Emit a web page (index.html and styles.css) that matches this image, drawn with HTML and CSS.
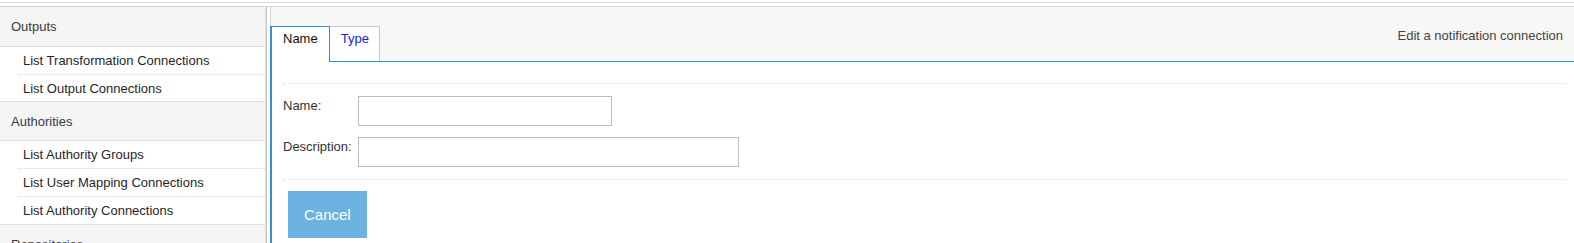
FILE: index.html
```html
<!DOCTYPE html>
<html>
<head>
<meta charset="utf-8">
<link rel="stylesheet" href="styles.css">
</head>
<body class="page">
<div class="topbar"></div>
<div class="layout">
  <nav class="sidebar">
    <div class="group">
      <div class="group-head group-head-first">Outputs</div>
      <a class="item">List Transformation Connections</a>
      <a class="item">List Output Connections</a>
    </div>
    <div class="group">
      <div class="group-head">Authorities</div>
      <a class="item">List Authority Groups</a>
      <a class="item">List User Mapping Connections</a>
      <a class="item">List Authority Connections</a>
    </div>
    <div class="group">
      <div class="group-head">Repositories</div>
      <a class="item">List Repository Connections</a>
    </div>
  </nav>
  <main class="main">
    <section class="panel">
      <div class="panel-head">
        <div class="tab tab-active">Name</div>
        <a class="tab tab-link">Type</a>
        <div class="panel-title">Edit a notification connection</div>
      </div>
      <div class="panel-body">
        <div class="sep"></div>
        <div class="form">
          <div class="row">
            <label class="label">Name:</label>
            <input class="field field-name" type="text">
          </div>
          <div class="row">
            <label class="label">Description:</label>
            <input class="field field-desc" type="text">
          </div>
        </div>
        <div class="sep"></div>
        <div class="actions">
          <button class="btn">Cancel</button>
        </div>
      </div>
    </section>
  </main>
</div>
</body>
</html>
```
FILE: styles.css
```css
html, body {
  margin: 0;
  padding: 0;
  overflow: hidden;
}
.page {
  font-family: "Liberation Sans", Arial, sans-serif;
  font-size: 13px;
  color: #333;
  background: #fff;
}
.topbar {
  height: 2px;
  border-bottom: 1px solid #d9d9d9;
  margin-bottom: 3px;
}
.layout {
  display: flex;
  border-top: 1px solid #d4d4d4;
  align-items: stretch;
  min-height: 400px;
}
.sidebar {
  width: 265px;
  flex: 0 0 265px;
  border-right: 1px solid #e2e2e2;
}
.group {
  border-bottom: 1px solid #e0e0e0;
}
.group-head {
  background: #f5f5f5;
  padding: 12px 11px 11px;
  line-height: 15px;
  color: #3a3a44;
  border-bottom: 1px solid #e0e0e0;
}
.group-head-first {
  padding-bottom: 12px;
}
.item {
  display: block;
  margin-left: 18px;
  padding: 6px 0 6px 5px;
  line-height: 15px;
  color: #1f1f2a;
  border-bottom: 1px dotted #d8d8d8;
}
.item:last-child {
  border-bottom: none;
}
.group:first-child .item:last-child {
  padding-bottom: 5px;
}
.main {
  flex: 1;
  border-left: 1px solid #c2c2c2;
  padding-left: 3px;
}
.panel {
  display: flex;
  flex-direction: column;
}
.panel-head {
  display: flex;
  align-items: flex-end;
  background: #f7f7f7;
  border-left: 1px solid #d4d4d4;
  border-bottom: 1px solid #2d93d6;
  padding-top: 19px;
}
.tab {
  display: block;
  background: #fff;
  line-height: 23px;
  padding: 0 10px 11px 11px;
  border-top: 1px solid #c8c8c8;
  border-right: 1px solid #c8c8c8;
}
.tab-active {
  margin-left: -1px;
  margin-bottom: -1px;
  padding: 0 11px 12px 11px;
  color: #111;
  border-left: 2px solid #2d93d6;
  border-top-color: #2d93d6;
  border-right-color: #2d93d6;
}
.tab-link {
  color: #1a1ae6;
}
.panel-title {
  margin-left: auto;
  align-self: flex-start;
  margin-top: 2px;
  padding-right: 11px;
  line-height: 15px;
  color: #444;
}
.panel-body {
  border-left: 2px solid #2d93d6;
  padding: 21px 9px 60px 11px;
}
.sep {
  border-top: 1px dotted #e0e0e0;
}
.form {
  display: flex;
  flex-direction: column;
  gap: 11px;
  padding: 12px 0;
}
.row {
  display: flex;
  align-items: flex-start;
}
.label {
  width: 75px;
  flex: 0 0 75px;
  padding-top: 2px;
  line-height: 15px;
  color: #333;
}
.field {
  box-sizing: border-box;
  height: 30px;
  margin: 0;
  border: 1px solid #bcbcbc;
  border-radius: 0;
  background: #fff;
  font-family: "Liberation Sans", Arial, sans-serif;
  font-size: 13px;
  padding: 0 6px;
}
.field-name {
  width: 254px;
}
.field-desc {
  width: 381px;
}
.actions {
  padding-top: 11px;
}
.btn {
  margin-left: 5px;
  background: #6cb2e1;
  color: #fff;
  border: none;
  border-radius: 0;
  font-family: "Liberation Sans", Arial, sans-serif;
  font-size: 15px;
  line-height: 17px;
  padding: 15px 16px;
}
```
